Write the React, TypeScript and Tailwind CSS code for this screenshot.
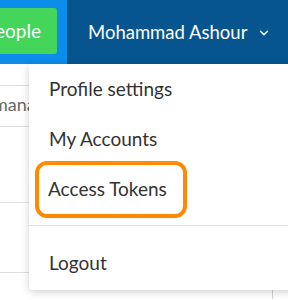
import { ChevronDown } from "lucide-react";

const font = { fontFamily: "Lato, 'Noto Sans', sans-serif" };

function TopBar() {
  return (
    <header className="flex h-16 w-full">
      <div className="h-full w-[67px] shrink-0 bg-[#0b8de9] pt-2">
        <div className="flex h-[46px] w-[57px] items-center justify-end rounded-r-[3px] bg-[#44d65a] pr-[16px] text-[19px] text-white">
          eople
        </div>
      </div>
      <div className="flex flex-1 items-center bg-[#06558f] pl-[21px] pt-[2px] text-[18.5px] text-white">
        <span>Mohammad Ashour</span>
        <ChevronDown className="ml-[10px] h-[14px] w-[14px]" strokeWidth={2.5} />
      </div>
    </header>
  );
}

function PageBehind() {
  return (
    <div className="relative h-[236px] bg-white">
      <div className="h-[22px] border-b border-[#dedede]" />
      <div className="flex h-[41px] items-center overflow-hidden border-b border-[#dedede] pb-[3px] text-[18px] text-[#666]">
        <span className="ml-[-7px]">manage</span>
      </div>
      <div className="h-[76px] border-b border-[#e4e4e4]" />
      <div className="h-[70px] border-b border-[#dedede]" />
      <div className="flex h-[26px]">
        <div className="w-[272px]" />
        <div className="w-px bg-[#d0d0d0]" />
      </div>
    </div>
  );
}

function Dropdown() {
  return (
    <div className="absolute left-[29px] top-16 flex w-[270px] flex-col rounded-bl-[4px] bg-white text-[19px] text-[#333] shadow-[0_2px_8px_rgba(0,0,0,0.18)]">
      <div className="flex h-[50px] items-center pl-5">Profile settings</div>
      <div className="flex h-[50px] items-center pl-5">My Accounts</div>
      <div className="flex h-[50px] items-center pl-[6px]">
        <div className="flex h-[57px] w-[152px] items-center rounded-[12px] border-[4.5px] border-[#ff8a00] pl-[9px]">
          Access Tokens
        </div>
      </div>
      <div className="mt-[11px] h-px bg-[#e2e2e2]" />
      <div className="flex h-[64px] items-center pl-5 pt-[11px]">Logout</div>
    </div>
  );
}

export default function App() {
  return (
    <div className="relative h-[300px] w-[288px] overflow-hidden bg-white" style={font}>
      <TopBar />
      <PageBehind />
      <Dropdown />
    </div>
  );
}
